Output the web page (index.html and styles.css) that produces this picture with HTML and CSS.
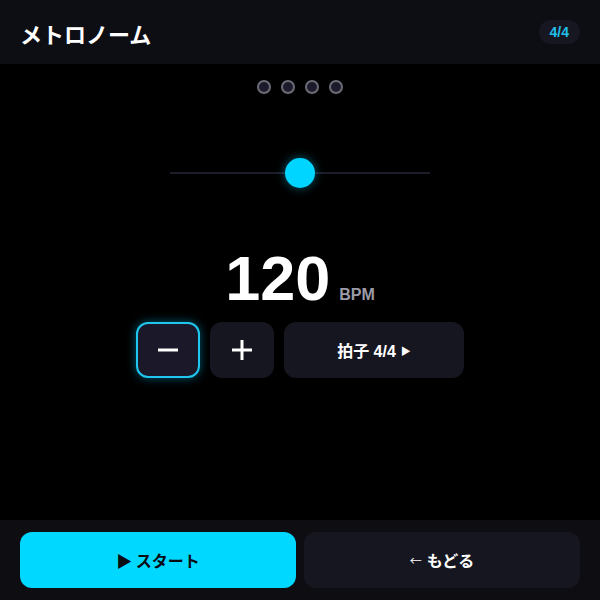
FILE: index.html
```html
<!DOCTYPE html>
<html lang="ja">
<head>
<meta charset="utf-8">
<title>メトロノーム</title>
<link rel="stylesheet" href="styles.css">
</head>
<body>
<div class="app">
  <header class="header">
    <h1 class="title">メトロノーム</h1>
    <span class="badge">4/4</span>
  </header>
  <main class="main">
    <div class="dots">
      <span class="dot"></span><span class="dot"></span><span class="dot"></span><span class="dot"></span>
    </div>
    <div class="slider">
      <div class="track"></div>
      <div class="thumb"></div>
    </div>
    <div class="tempo">
      <span class="bpm-value">120</span>
      <span class="bpm-unit">BPM</span>
    </div>
    <div class="controls">
      <button class="ctrl ctrl-square ctrl-active" aria-label="minus">
        <svg width="22" height="22" viewBox="0 0 22 22"><line x1="1" y1="11" x2="21" y2="11" stroke="#fff" stroke-width="3"/></svg>
      </button>
      <button class="ctrl ctrl-square" aria-label="plus">
        <svg width="22" height="22" viewBox="0 0 22 22"><line x1="1" y1="11" x2="21" y2="11" stroke="#fff" stroke-width="3"/><line x1="11" y1="1" x2="11" y2="21" stroke="#fff" stroke-width="3"/></svg>
      </button>
      <button class="ctrl ctrl-wide">拍子 4/4 <span class="tri">▶</span></button>
    </div>
  </main>
  <footer class="footer">
    <button class="fbtn fbtn-start">▶ スタート</button>
    <button class="fbtn fbtn-back"><span class="arrow">←</span> もどる</button>
  </footer>
</div>
</body>
</html>
```

FILE: styles.css
```css
* { box-sizing: border-box; }
html, body { margin: 0; padding: 0; background: #000; }
body {
  font-family: "Liberation Sans", "Noto Sans CJK JP", sans-serif;
  color: #fff;
}
.app {
  width: 600px;
  height: 600px;
  display: flex;
  flex-direction: column;
}
.header {
  height: 64px;
  background: #0d0d14;
  display: flex;
  align-items: center;
  justify-content: space-between;
  padding: 0 20px;
}
.title {
  margin: 0;
  font-family: "Noto Sans CJK JP", sans-serif;
  font-size: 22px;
  font-weight: 700;
  line-height: 1;
  padding-top: 1px;
}
.badge {
  height: 24px;
  padding: 0 11px;
  border-radius: 12px;
  background: #171722;
  color: #22bfe8;
  font-size: 14px;
  font-weight: 700;
  display: flex;
  align-items: center;
}
.main {
  flex: 1;
  background: #000;
  display: flex;
  flex-direction: column;
  align-items: center;
  padding-top: 16px;
}
.dots {
  display: flex;
  gap: 10px;
}
.dot {
  width: 14px;
  height: 14px;
  border-radius: 50%;
  border: 2px solid #6c6c78;
  background: #1b1b2b;
}
.slider {
  margin-top: 64px;
  width: 260px;
  height: 30px;
  display: flex;
  align-items: center;
  justify-content: center;
  position: relative;
}
.track {
  width: 100%;
  height: 2px;
  background: #1d1d29;
}
.thumb {
  position: absolute;
  left: 115px;
  top: 0;
  width: 30px;
  height: 30px;
  border-radius: 50%;
  background: #00d5ff;
  box-shadow: 0 0 10px rgba(0, 213, 255, 0.45);
}
.tempo {
  margin-top: 58px;
  display: flex;
  align-items: baseline;
  gap: 9px;
  height: 64px;
}
.bpm-value {
  font-size: 63px;
  font-weight: 700;
  line-height: 64px;
}
.bpm-unit {
  font-size: 16px;
  font-weight: 700;
  color: #9b9ba8;
}
.controls {
  margin-top: 12px;
  display: flex;
  gap: 10px;
}
.ctrl {
  height: 56px;
  border: none;
  border-radius: 12px;
  background: #161620;
  color: #fff;
  display: flex;
  align-items: center;
  justify-content: center;
  padding: 0;
  font-family: "Liberation Sans", "Noto Sans CJK JP", sans-serif;
}
.ctrl-square { width: 64px; }
.ctrl-active {
  background: #1a1829;
  border: 2px solid #1fc6ee;
  box-shadow: 0 0 10px rgba(0, 200, 255, 0.45);
}
.ctrl-wide {
  width: 180px;
  font-size: 16px;
  font-weight: 700;
  gap: 4px;
}
.tri {
  font-size: 10px;
  margin-left: 1px;
}
.footer {
  height: 80px;
  background: #0d0d12;
  display: flex;
  gap: 8px;
  padding: 12px 20px;
}
.fbtn {
  flex: 1;
  height: 56px;
  border: none;
  border-radius: 12px;
  font-family: "Noto Sans CJK JP", sans-serif;
  font-size: 16px;
  font-weight: 700;
  display: flex;
  align-items: center;
  justify-content: center;
}
.fbtn-start {
  background: #00d8ff;
  color: #0a0c14;
}
.fbtn-back {
  background: #161620;
  color: #fff;
}
.arrow {
  font-size: 12px;
  margin-right: 5px;
  font-weight: 400;
}
```
